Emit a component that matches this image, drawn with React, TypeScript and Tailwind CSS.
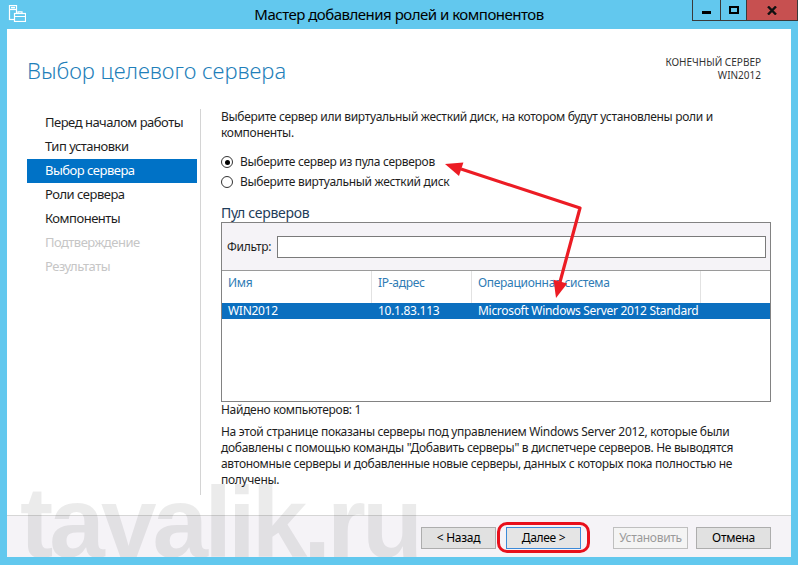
import React from "react";

const FONT = "font-['Noto_Sans',sans-serif]";

const navItems = [
  { label: "Перед началом работы", state: "done" },
  { label: "Тип установки", state: "done" },
  { label: "Выбор сервера", state: "active" },
  { label: "Роли сервера", state: "done" },
  { label: "Компоненты", state: "done" },
  { label: "Подтверждение", state: "off" },
  { label: "Результаты", state: "off" },
];

function AppIcon() {
  return (
    <svg width="18" height="17" viewBox="0 0 18 17" aria-hidden>
      <rect x="1.5" y="0.5" width="7" height="14" fill="none" stroke="#fff" strokeWidth="1.2" />
      <line x1="1.5" y1="4.5" x2="8.5" y2="4.5" stroke="#fff" strokeWidth="1.2" />
      <rect x="3" y="1.8" width="4" height="1.6" fill="#fff" />
      <rect x="6.5" y="8.5" width="11" height="8" fill="#62c8ee" stroke="#fff" strokeWidth="1.2" />
      <path d="M10 8.5V6.8h4v1.7" fill="none" stroke="#fff" strokeWidth="1.2" />
      <line x1="6.5" y1="11.5" x2="17.5" y2="11.5" stroke="#fff" strokeWidth="1" />
    </svg>
  );
}

function Radio({ checked, label }: { checked?: boolean; label: string }) {
  return (
    <div className="flex h-[20px] items-center gap-[7px]">
      <span className="flex size-[12px] items-center justify-center rounded-full border border-[#333] bg-white">
        {checked ? <span className="size-[5px] rounded-full bg-black" /> : null}
      </span>
      <span>{label}</span>
    </div>
  );
}

function WizButton({
  children,
  disabled,
  focused,
}: {
  children: React.ReactNode;
  disabled?: boolean;
  focused?: boolean;
}) {
  return (
    <button
      type="button"
      className={
        disabled
          ? "h-[22px] w-[75px] border border-[#bfbfbf] bg-[#f4f4f4] text-[12px] text-[#9a9a9a]"
          : focused
            ? "h-[22px] w-[75px] border border-[#3c8ad8] bg-[#e5e5e5] text-[12px] text-black"
            : "h-[22px] w-[75px] border border-[#adadad] bg-[#e1e1e1] text-[12px] text-black"
      }
    >
      {children}
    </button>
  );
}

export default function App() {
  return (
    <div className={`relative flex h-[565px] w-[798px] flex-col overflow-hidden bg-[#62c8ee] ${FONT}`}>
      {/* title bar */}
      <div className="grid h-[29px] shrink-0 grid-cols-[1fr_auto_1fr]">
        <div className="flex items-start pl-[8px] pt-[5px]">
          <AppIcon />
        </div>
        <div className="pt-[3px] text-[15px] leading-[22px] tracking-[-0.5px] text-black">
          Мастер добавления ролей и компонентов
        </div>
        <div className="flex items-start justify-end">
          <div className="flex h-[21px] border border-t-0 border-[#3a3a3a]">
            <div className="flex w-[28px] items-end justify-center border-r border-[#3a3a3a] pb-[6px]">
              <span className="h-[3px] w-[9px] bg-black" />
            </div>
            <div className="flex w-[26px] items-center justify-center border-r border-[#3a3a3a]">
              <span className="h-[8px] w-[10px] border-2 border-black" />
            </div>
            <div className="flex w-[50px] items-center justify-center bg-[#c75050]">
              <svg width="10" height="9" viewBox="0 0 10 9" aria-hidden>
                <path d="M1 0.5l8 8M9 0.5l-8 8" stroke="#111" strokeWidth="2.4" />
              </svg>
            </div>
          </div>
        </div>
      </div>

      {/* client area */}
      <div className="relative mx-[7px] mb-[8px] flex flex-1 flex-col overflow-hidden bg-white text-[12px] tracking-[-0.3px] text-[#1e1e1e]">
        {/* header */}
        <div className="flex h-[80px] shrink-0 justify-between pl-[20px] pr-[30px]">
          <h1 className="pt-[26px] text-[22px] font-light leading-[30px] tracking-normal text-[#1f7fba]">
            Выбор целевого сервера
          </h1>
          <div className="pt-[27px] text-right text-[10px] leading-[13px] tracking-normal text-[#333]">
            <div>КОНЕЧНЫЙ СЕРВЕР</div>
            <div>WIN2012</div>
          </div>
        </div>

        {/* body */}
        <div className="flex h-[386px] shrink-0">
          <nav className="w-[194px] shrink-0 border-r border-[#d4d4d4] pl-[20px] pr-[3px] pt-[2px]">
            <ul>
              {navItems.map((item) => (
                <li
                  key={item.label}
                  className={
                    item.state === "active"
                      ? "flex h-[24px] items-center bg-[#0072c6] pl-[18px] text-[13px] tracking-[-0.5px] text-white"
                      : item.state === "off"
                        ? "flex h-[24px] items-center pl-[18px] text-[13px] tracking-[-0.5px] text-[#c6c6c6]"
                        : "flex h-[24px] items-center pl-[18px] text-[13px] tracking-[-0.5px] text-[#1e1e1e]"
                  }
                >
                  {item.label}
                </li>
              ))}
            </ul>
          </nav>

          <section className="flex w-[550px] flex-col pl-[20px] leading-[16px]">
            <p className="w-[530px]">
              Выберите сервер или виртуальный жесткий диск, на котором будут установлены роли и компоненты.
            </p>

            <div className="mt-[11px]">
              <Radio checked label="Выберите сервер из пула серверов" />
              <Radio label="Выберите виртуальный жесткий диск" />
            </div>

            <div className="mt-[12px] text-[14px] leading-[18px] text-[#1e3c5a]">Пул серверов</div>

            <div className="flex h-[180px] w-[550px] flex-col border border-[#828282]">
              <div className="flex h-[48px] items-center gap-[6px] border-b border-[#9a9a9a] bg-[#f5f3f7] pl-[5px] pr-[4px]">
                <span>Фильтр:</span>
                <div className="h-[22px] flex-1 border border-[#7a7a7a] bg-white" />
              </div>
              <div className="grid h-[32px] grid-cols-[149px_100px_229px_1fr] text-[#2f7cb5]">
                <div className="pl-[6px] pt-[4px]">Имя</div>
                <div className="border-l border-[#e2e2e2] pl-[6px] pt-[4px]">IP-адрес</div>
                <div className="border-l border-[#e2e2e2] pl-[6px] pt-[4px]">Операционная система</div>
                <div className="border-l border-[#e2e2e2]" />
              </div>
              <div className="grid h-[16px] grid-cols-[149px_100px_229px_1fr] bg-[#0b6fbf] text-white">
                <div className="pl-[6px]">WIN2012</div>
                <div className="pl-[7px]">10.1.83.113</div>
                <div className="pl-[7px] whitespace-nowrap">Microsoft Windows Server 2012 Standard</div>
                <div />
              </div>
            </div>

            <div>Найдено компьютеров: 1</div>
            <p className="mt-[6px] whitespace-nowrap">
              На этой странице показаны серверы под управлением Windows Server 2012, которые были
              <br />
              добавлены с помощью команды "Добавить серверы" в диспетчере серверов. Не выводятся
              <br />
              автономные серверы и добавленные новые серверы, данных с которых пока полностью не
              <br />
              получены.
            </p>
          </section>
        </div>

        <div className="flex-1" />

        {/* footer */}
        <div className="flex h-[42px] shrink-0 items-start justify-end border-t border-[#d6d6d6] bg-[#f5f3f7] pr-[20px] pt-[11px]">
          <WizButton>&lt; Назад</WizButton>
          <div className="relative ml-[10px]">
            <WizButton focused>Далее &gt;</WizButton>
            <span className="pointer-events-none absolute -bottom-[4px] -left-[9px] -right-[9px] -top-[5px] rounded-[10px] border-[3px] border-[#e8101c]" />
          </div>
          <div className="ml-[32px]">
            <WizButton disabled>Установить</WizButton>
          </div>
          <div className="ml-[8px]">
            <WizButton>Отмена</WizButton>
          </div>
        </div>

        {/* watermark */}
        <div className="pointer-events-none absolute left-[13px] top-[443px] font-['Liberation_Sans',sans-serif] text-[100px] font-bold leading-none tracking-[-4px] text-black/[0.08]">
          tavalik.ru
        </div>
      </div>

      {/* annotation arrows */}
      <svg
        className="pointer-events-none absolute left-0 top-0"
        width="798"
        height="565"
        viewBox="0 0 798 565"
        aria-hidden
      >
        <polyline
          points="461,169 580,208 560,282"
          fill="none"
          stroke="#ec1c24"
          strokeWidth="3.2"
          strokeLinejoin="round"
        />
        <polygon points="445,164 463.4,162.6 459,176" fill="#ec1c24" />
        <polygon points="556,298 567.2,283.4 553.6,279.8" fill="#ec1c24" />
      </svg>
    </div>
  );
}
